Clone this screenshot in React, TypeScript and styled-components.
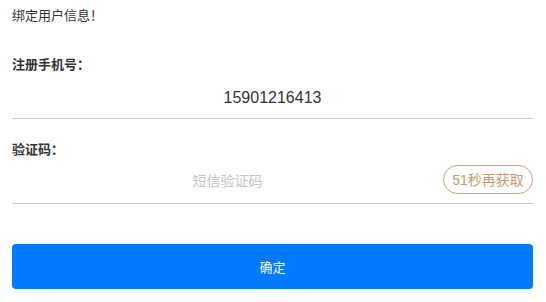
import styled, { createGlobalStyle } from "styled-components";

const GlobalStyle = createGlobalStyle`
    html, body {
        margin: 0;
        padding: 0;
        background: #ffffff;
    }
    body {
        font-family: "Liberation Sans", "Noto Sans CJK SC", sans-serif;
        color: #333333;
    }
`;

export default function App() {
    return (
        <>
            <GlobalStyle />
            <Page>
                <Title>绑定用户信息！</Title>
                <Field $top={18}>
                    <Label>注册手机号：</Label>
                    <InputRow $bottom={2}>
                        <PhoneInput readOnly value="15901216413" />
                    </InputRow>
                </Field>
                <Field $top={16}>
                    <Label>验证码：</Label>
                    <InputRow $bottom={10}>
                        <CodeInput placeholder="短信验证码" />
                        <CountdownButton type="button">51秒再获取</CountdownButton>
                    </InputRow>
                </Field>
                <SubmitButton type="button">确定</SubmitButton>
            </Page>
        </>
    );
}

const Page = styled.div`
    padding: 0 13px 0 12px;
    display: flex;
    flex-direction: column;
`;

const Title = styled.div`
    height: 32px;
    line-height: 32px;
    font-size: 13px;
    color: #333333;
`;

const Field = styled.div<{ $top: number }>`
    margin-top: ${(p) => p.$top}px;
    display: flex;
    flex-direction: column;
`;

const Label = styled.div`
    height: 30px;
    line-height: 30px;
    font-size: 13px;
    font-weight: bold;
    color: #333333;
`;

const InputRow = styled.div<{ $bottom: number }>`
    height: 39px;
    box-sizing: border-box;
    padding-bottom: ${(p) => p.$bottom}px;
    display: flex;
    align-items: center;
    border-bottom: 1px solid #cccccc;
`;

const BaseInput = styled.input`
    flex: 1;
    min-width: 0;
    border: none;
    outline: none;
    padding: 0;
    background: transparent;
    text-align: center;
    font-family: "Liberation Sans", "Noto Sans CJK SC", sans-serif;
    color: #333333;
`;

const PhoneInput = styled(BaseInput)`
    font-size: 16px;
    height: 24px;
`;

const CodeInput = styled(BaseInput)`
    font-size: 14px;
    height: 24px;
    margin-top: 4px;

    &::placeholder {
        color: #c4c4c4;
    }
`;

const CountdownButton = styled.button`
    width: 90px;
    height: 29px;
    box-sizing: border-box;
    padding: 0;
    border: 1px solid #c9a47f;
    border-radius: 15px;
    background: #ffffff;
    color: #c49c74;
    font-size: 14px;
    font-family: "Liberation Sans", "Noto Sans CJK SC", sans-serif;
`;

const SubmitButton = styled.button`
    margin-top: 40px;
    height: 45px;
    border: none;
    border-radius: 4px;
    background: #007aff;
    color: #ffffff;
    font-size: 13px;
    font-family: "Liberation Sans", "Noto Sans CJK SC", sans-serif;
`;
